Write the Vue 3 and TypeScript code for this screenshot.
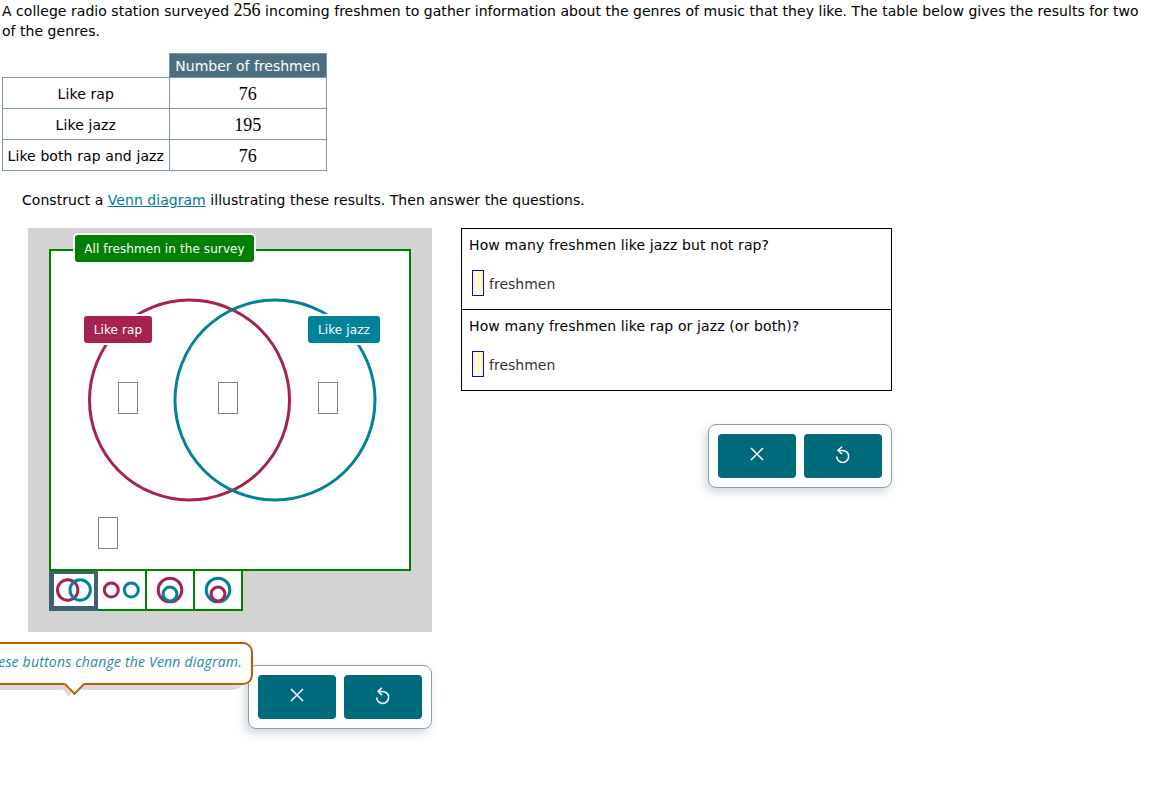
<script setup lang="ts">
interface Row { label: string; value: string }
const rows: Row[] = [
  { label: 'Like rap', value: '76' },
  { label: 'Like jazz', value: '195' },
  { label: 'Like both rap and jazz', value: '76' },
]
const slots = [
  { x: 67, y: 131 },
  { x: 167, y: 131 },
  { x: 267, y: 131 },
  { x: 47, y: 266 },
]
const questions = ['How many freshmen like jazz but not rap?', 'How many freshmen like rap or jazz (or both)?']
</script>

<template>
  <div class="page">
    <p class="intro">A college radio station surveyed <span class="num big">256</span> incoming freshmen to gather information about the genres of music that they like. The table below gives the results for two of the genres.</p>
    <table class="data">
      <thead>
        <tr><th class="blank"></th><th class="head">Number of freshmen</th></tr>
      </thead>
      <tbody>
        <tr v-for="r in rows" :key="r.label">
          <td class="lab">{{ r.label }}</td>
          <td class="num val">{{ r.value }}</td>
        </tr>
      </tbody>
    </table>
    <p class="lead">Construct a <a class="link">Venn diagram</a> illustrating these results. Then answer the questions.</p>

    <div class="work">
      <div class="left">
        <div class="panel">
          <div class="universe">
            <svg class="circles" width="362" height="322" viewBox="0 0 362 322">
              <circle cx="140.5" cy="151" r="100" class="c-r" />
              <circle cx="226" cy="151" r="100" class="c-j" />
            </svg>
            <span class="tag tag-all">All freshmen in the survey</span>
            <span class="tag tag-rap">Like rap</span>
            <span class="tag tag-jazz">Like jazz</span>
            <span v-for="(s, i) in slots" :key="i" class="slot" :style="{ left: s.x + 'px', top: s.y + 'px' }"></span>
          </div>
          <div class="tools">
            <div class="tool active">
              <svg width="40" height="32" viewBox="0 0 40 32"><circle cx="13.7" cy="16" r="10.2" class="c-r" /><circle cx="26.2" cy="16" r="10.2" class="c-j" /></svg>
            </div>
            <div class="tool wide">
              <svg width="46" height="36" viewBox="0 0 46 36"><circle cx="12.3" cy="18" r="7" class="c-r" /><circle cx="32.3" cy="18" r="7" class="c-j" /></svg>
            </div>
            <div class="tool">
              <svg width="46" height="36" viewBox="0 0 46 36"><circle cx="23" cy="18" r="11.8" class="c-r" /><circle cx="23" cy="22" r="6.9" class="c-j" /></svg>
            </div>
            <div class="tool">
              <svg width="46" height="36" viewBox="0 0 46 36"><circle cx="23" cy="18" r="11.8" class="c-j" /><circle cx="23" cy="22" r="6.9" class="c-r" /></svg>
            </div>
          </div>
        </div>
        <div class="hint">
          <span class="tip-shade"></span>
          <div class="tip">
            <em>These buttons change the Venn diagram.</em>
            <span class="tip-arrow"></span>
          </div>
          <div class="actions">
            <button class="act" type="button" aria-label="Clear">
              <svg width="16" height="20" viewBox="0 0 16 20"><path d="M2 2 L14 14 M14 2 L2 14" /></svg>
            </button>
            <button class="act" type="button" aria-label="Undo">
              <svg width="18" height="20" viewBox="0 0 18 20"><path d="M8 .7 L4 4.3 L8 8 M4.2 4.4 H8.7 A6 6 0 1 1 2.7 10.5" /></svg>
            </button>
          </div>
        </div>
      </div>

      <div class="right">
        <div class="answers">
          <div v-for="q in questions" :key="q" class="qa">
            <div class="q">{{ q }}</div>
            <div class="a"><span class="box"></span><span class="unit">freshmen</span></div>
          </div>
        </div>
        <div class="actions side">
          <button class="act" type="button" aria-label="Clear">
            <svg width="16" height="20" viewBox="0 0 16 20"><path d="M2 2 L14 14 M14 2 L2 14" /></svg>
          </button>
          <button class="act" type="button" aria-label="Undo">
            <svg width="18" height="20" viewBox="0 0 18 20"><path d="M8 .7 L4 4.3 L8 8 M4.2 4.4 H8.7 A6 6 0 1 1 2.7 10.5" /></svg>
          </button>
        </div>
      </div>
    </div>
  </div>
</template>

<style>
html, body { margin: 0; background: #fff; }
</style>

<style scoped>
.page {
  width: 1162px;
  height: 790px;
  overflow: hidden;
  position: relative;
  font-family: "DejaVu Sans", Verdana, sans-serif;
  font-size: 14px;
  line-height: 20px;
  color: #000;
  box-sizing: border-box;
}
.intro { margin: 0 20px 0 2px; letter-spacing: 0.035px; }
.num { font-family: "Liberation Serif", serif; }
.big { font-size: 18px; letter-spacing: 0; }
.data {
  border-collapse: collapse;
  margin: 12px 0 0 2px;
  width: 325px;
  table-layout: fixed;
}
.blank { width: 166px; padding: 0; border: none; border-bottom: 1px solid #7b98a3; }
.head {
  background: #4c6f7f;
  color: #fff;
  font-weight: 400;
  height: 23px;
  padding: 0;
  border: 1px solid #7b98a3;
}
.data td {
  border: 1px solid #7b98a3;
  text-align: center;
  height: 31px;
  padding: 1px 0 0;
  box-sizing: border-box;
}
.lab { letter-spacing: 0.1px; }
.val { font-size: 18px; }
.lead { margin: 19px 0 0 22px; letter-spacing: 0.04px; }
.link { color: #007c97; text-decoration: underline; }
.work { display: flex; margin-top: 18px; margin-left: 28px; align-items: flex-start; }
.left { width: 404px; flex: none; }
.panel {
  position: relative;
  width: 404px;
  height: 404px;
  background: #d3d3d3;
  padding: 21px;
  box-sizing: border-box;
}
.universe {
  position: relative;
  width: 362px;
  height: 322px;
  background: #fff;
  border: 2px solid #008000;
  box-sizing: border-box;
}
.circles { position: absolute; left: -2px; top: -2px; }
.c-r, .c-j { fill: none; stroke-width: 3; }
.c-r { stroke: #a62351; }
.c-j { stroke: #008299; }
.tag {
  position: absolute;
  color: #fff;
  font-size: 12px;
  line-height: 28px;
  height: 27px;
  text-align: center;
  letter-spacing: 0.1px;
  border-radius: 3px;
  white-space: nowrap;
  box-shadow: 0 0 0 2px #fff;
}
.tag-all { left: 24px; top: -16px; width: 179px; background: #008000; }
.tag-rap { left: 33px; top: 65px; width: 68px; background: #a62351; }
.tag-jazz { left: 257px; top: 65px; width: 72px; background: #008299; }
.slot {
  position: absolute;
  width: 20px;
  height: 32px;
  background: #fff;
  border: 1px solid #808080;
  box-sizing: border-box;
}
.tools { display: flex; height: 40px; align-items: flex-start; }
.tool {
  width: 48px;
  height: 40px;
  flex: none;
  box-sizing: border-box;
  border-right: 2px solid #008000;
  border-bottom: 2px solid #008000;
  background: #fff;
  display: flex;
  align-items: center;
  justify-content: center;
}
.tool.wide { width: 49px; }
.tool.active {
  width: 49px;
  height: 42px;
  margin-top: -2px;
  border: solid #3c6274;
  border-width: 5px 4px 5px 5px;
}
.hint {
  position: relative;
  display: flex;
  justify-content: flex-end;
  margin-top: 33px;
}
.tip-shade {
  position: absolute;
  left: 32px;
  top: 20px;
  width: 17px;
  height: 12px;
  background: #d9d9d9;
  clip-path: polygon(0 0, 100% 0, 50% 100%);
}
.tip {
  position: absolute;
  right: 179px;
  top: -23px;
  width: 300px;
  height: 43px;
  box-sizing: border-box;
  border: 2px solid #bf5c00;
  border-radius: 10px;
  background: #fff;
  box-shadow: -10px 5px 0 #d9d9d9;
  color: #1f8a9e;
  font-family: "Open Sans", Lato, sans-serif;
  font-size: 14px;
  line-height: 35px;
  letter-spacing: 0.2px;
  text-align: right;
  padding-right: 9px;
  white-space: nowrap;
  z-index: 1;
}
.tip-arrow {
  position: absolute;
  left: 111.5px;
  bottom: -8.9px;
  width: 15px;
  height: 15px;
  background: #fff;
  border-right: 2px solid #bf5c00;
  border-bottom: 2px solid #bf5c00;
  transform: rotate(45deg);
  box-sizing: border-box;
}
.actions {
  display: flex;
  gap: 8px;
  padding: 9px;
  width: 184px;
  height: 64px;
  box-sizing: border-box;
  background: #fff;
  border: 1px solid #88a2ad;
  border-radius: 8px;
  box-shadow: -3px 4px 10px rgba(70, 100, 110, 0.25);
}
.act {
  width: 78px;
  height: 44px;
  background: #006a7d;
  border: none;
  border-radius: 4px;
  padding: 0;
  display: flex;
  align-items: center;
  justify-content: center;
}
.act svg path { fill: none; stroke: #fff; stroke-width: 1.5; }
.right { margin-left: 29px; width: 431px; flex: none; }
.answers { border: 1px solid #000; }
.qa { height: 80px; box-sizing: border-box; padding: 6px 7px 0; }
.qa + .qa { border-top: 1px solid #000; height: 81px; }
.q { height: 20px; letter-spacing: 0.12px; }
.a { display: flex; align-items: center; margin-top: 15px; color: #333; }
.unit { padding-top: 1px; }
.box {
  width: 12px;
  height: 26px;
  margin: 0 5px 0 3px;
  box-sizing: border-box;
  border: 1px solid #00f;
  background: #fdf8d0;
}
.side { margin: 33px 0 0 247px; }
</style>
